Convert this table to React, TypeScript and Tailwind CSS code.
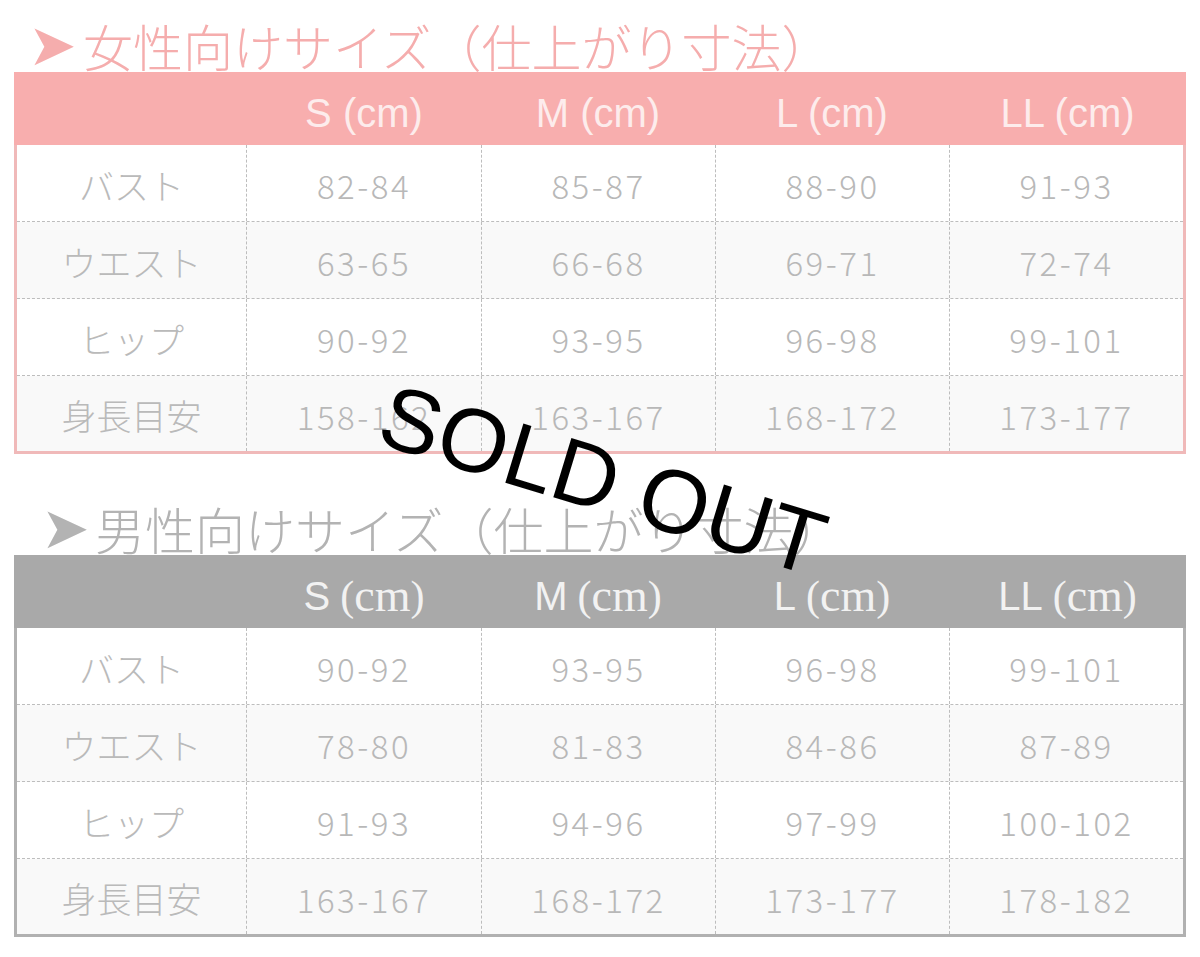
import { FunctionComponent } from "react";

type Row = { label: string; values: string[] };

const sizes = ["S", "M", "L", "LL"];

const womenRows: Row[] = [
  { label: "バスト", values: ["82-84", "85-87", "88-90", "91-93"] },
  { label: "ウエスト", values: ["63-65", "66-68", "69-71", "72-74"] },
  { label: "ヒップ", values: ["90-92", "93-95", "96-98", "99-101"] },
  { label: "身長目安", values: ["158-162", "163-167", "168-172", "173-177"] },
];

const menRows: Row[] = [
  { label: "バスト", values: ["90-92", "93-95", "96-98", "99-101"] },
  { label: "ウエスト", values: ["78-80", "81-83", "84-86", "87-89"] },
  { label: "ヒップ", values: ["91-93", "94-96", "97-99", "100-102"] },
  { label: "身長目安", values: ["163-167", "168-172", "173-177", "178-182"] },
];

interface SizeTableProps {
  rows: Row[];
  men?: boolean;
}

const SizeTable: FunctionComponent<SizeTableProps> = ({ rows, men }) => {
  return (
    <div className="w-[1172px] ml-[14px]">
      {/* header */}
      <div
        className={
          "grid grid-cols-[233px_234px_234px_234px_237px] h-[73px] " +
          (men ? "bg-[#a9a9a9] text-[#f2f2f2]" : "bg-[#f8aeae] text-[#fdecec]")
        }
      >
        <div />
        {sizes.map((s) => (
          <div
            key={s}
            className="flex items-center justify-center pt-[8px] text-[40px] leading-none font-['Liberation_Sans',sans-serif]"
          >
            {men ? (
              <>
                {s}
                <span className="ml-[10px] font-['Liberation_Serif',serif] text-[42px]">(</span>
                <span className="font-['Liberation_Serif',serif] text-[46px]">cm</span>
                <span className="font-['Liberation_Serif',serif] text-[42px]">)</span>
              </>
            ) : (
              `${s} (cm)`
            )}
          </div>
        ))}
      </div>
      {/* body */}
      <div
        className={
          "border-x-[3px] border-b-[3px] " +
          (men ? "border-[#b1b1b1]" : "border-[#f0b9b9]")
        }
      >
        {rows.map((row, i) => (
          <div
            key={row.label}
            className={
              "grid grid-cols-[230px_235px_234px_234px_233px] " +
              (i % 2 === 1 ? "bg-[#f9f9f9] " : "bg-white ") +
              (i === rows.length - 1
                ? "h-[75px]"
                : "h-[77px] border-b border-dashed border-[#bdbdbd]")
            }
          >
            <div className="flex items-center justify-center pt-[4px] border-r border-dashed border-[#bdbdbd] text-[35px] text-[#bababa] font-['Noto_Sans_CJK_JP',sans-serif] font-light">
              {row.label}
            </div>
            {row.values.map((v, j) => (
              <div
                key={j}
                className={
                  "flex items-center justify-center pt-[6px] text-[33px] tracking-[2.5px] text-[#b8b8b8] font-['Noto_Sans_CJK_JP',sans-serif] font-light " +
                  (j < 3 ? "border-r border-dashed border-[#bdbdbd]" : "")
                }
              >
                {v}
              </div>
            ))}
          </div>
        ))}
      </div>
    </div>
  );
};

export default function App() {
  return (
    <div className="relative w-[1200px] h-[957px] bg-white overflow-hidden">
      <div className="h-[72px] flex items-end pl-[28px] text-[50px] leading-[54px] text-[#f5adad] font-['Noto_Sans_CJK_JP',sans-serif] font-light whitespace-nowrap">
        <span className="w-[55px] text-[58px] font-['DejaVu_Sans',sans-serif]">➤</span>
        女性向けサイズ（仕上がり寸法）
      </div>
      <SizeTable rows={womenRows} />

      <div className="h-[101px] flex items-end pl-[41px] text-[50px] leading-[54px] text-[#b3b3b3] font-['Noto_Sans_CJK_JP',sans-serif] font-light whitespace-nowrap">
        <span className="w-[54px] text-[58px] font-['DejaVu_Sans',sans-serif]">➤</span>
        男性向けサイズ（仕上がり寸法）
      </div>
      <SizeTable rows={menRows} men />

      <div className="absolute left-[603px] top-[480px] -translate-x-1/2 -translate-y-1/2 rotate-[17deg] whitespace-nowrap text-[90px] leading-none text-black font-['Liberation_Sans',sans-serif]">
        SOLD OUT
      </div>
    </div>
  );
}
